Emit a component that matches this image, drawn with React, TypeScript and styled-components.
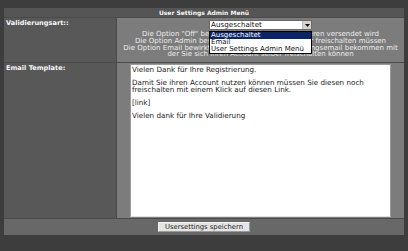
import styled, { createGlobalStyle } from "styled-components"

const GlobalStyle = createGlobalStyle`
  html, body {
    margin: 0;
    padding: 0;
    background: #3d3d3d;
  }
  body {
    font-family: "DejaVu Sans", Verdana, sans-serif;
    font-size: 7px;
    color: #ececec;
  }
`

const Page = styled.div`
  padding: 8px 4px 0 4px;
  width: 400px;
`

const Table = styled.div`
  display: grid;
  grid-template-columns: 112px 287px;
  gap: 1px;
  background: #4a4a4a;
`

const HeaderCell = styled.div`
  grid-column: 1 / 3;
  height: 9px;
  line-height: 9px;
  font-size: 6px;
  background: #555555;
  color: #f4f4f4;
  font-weight: bold;
  text-align: center;
`

const LabelCell = styled.div`
  background: #585858;
  color: #f6f6f6;
  font-weight: bold;
  font-size: 6.6px;
  padding: 2px 2px;
  line-height: 7px;
`

const ValueCell = styled.div<{ $pad?: string }>`
  background: #7c7c7c;
  padding: ${(p) => p.$pad || "2px 0 4px 0"};
  display: flex;
  flex-direction: column;
  align-items: center;
  position: relative;
  min-width: 0;
`

const SelectWrap = styled.div`
  position: relative;
  width: 103px;
  margin-bottom: 1px;
`

const SelectBox = styled.div`
  height: 10px;
  box-sizing: border-box;
  background: #ffffff;
  border: 1px solid #6a6a6a;
  color: #111;
  font-size: 7.2px;
  line-height: 8px;
  padding-left: 1px;
  display: flex;
  justify-content: space-between;
`

const Arrow = styled.div`
  width: 8px;
  height: 8px;
  background: #d6d3ce;
  border-left: 1px solid #b8b8b8;
  display: flex;
  align-items: center;
  justify-content: center;
`

const DropList = styled.div`
  position: absolute;
  top: 11px;
  left: 0;
  right: 0;
  background: #ffffff;
  border: 1px solid #000;
  z-index: 2;
`

const Option = styled.div<{ $selected?: boolean }>`
  height: 7px;
  line-height: 7px;
  font-size: 7px;
  padding-left: 1px;
  white-space: nowrap;
  overflow: hidden;
  background: ${(p) => (p.$selected ? "#0a246a" : "transparent")};
  color: ${(p) => (p.$selected ? "#ffffff" : "#111111")};
`

const Description = styled.div`
  text-align: center;
  line-height: 6.8px;
  font-size: 7px;
  color: #ececec;
  white-space: nowrap;
`

const TemplateBox = styled.div`
  width: 261px;
  height: 153px;
  box-sizing: border-box;
  background: #ffffff;
  border: 1px solid #9a9a9a;
  border-bottom-color: #e0e0e0;
  color: #1a1a1a;
  padding: 2px 1px;
  font-size: 7.2px;
  line-height: 6.5px;
  white-space: pre-wrap;
`

const FooterCell = styled.div`
  grid-column: 1 / 3;
  background: #686868;
  height: 16px;
  display: flex;
  align-items: center;
  justify-content: center;
`

const SaveButton = styled.div`
  width: 92px;
  height: 10px;
  box-sizing: border-box;
  background: #e4e4e4;
  border: 1px solid #f4f4f4;
  border-right-color: #9a9a9a;
  border-bottom-color: #9a9a9a;
  color: #1a1a1a;
  font-size: 6.8px;
  text-align: center;
  line-height: 8px;
`

const template = `Vielen Dank für Ihre Registrierung.

Damit Sie ihren Account nutzen können müssen Sie diesen noch
freischalten mit einem Klick auf diesen Link.

[link]

Vielen dank für Ihre Validierung`

export default function App() {
  return (
    <>
      <GlobalStyle />
      <Page>
        <Table>
          <HeaderCell>User Settings Admin Menü</HeaderCell>
          <LabelCell>Validierungsart::</LabelCell>
          <ValueCell>
            <SelectWrap>
              <SelectBox>
                <span>Ausgeschaltet</span>
                <Arrow>
                  <svg width="5" height="3" viewBox="0 0 5 3">
                    <path d="M0 0 L5 0 L2.5 3 Z" fill="#111" />
                  </svg>
                </Arrow>
              </SelectBox>
              <DropList>
                <Option $selected>Ausgeschaltet</Option>
                <Option>Email</Option>
                <Option>User Settings Admin Menü</Option>
              </DropList>
            </SelectWrap>
            <Description>
              Die Option "Off" bewirkt, dass nichts zum Validieren versendet wird
              <br />
              Die Option Admin bewirkt, dass Sie als Admin User freischalten müssen
              <br />
              Die Option Email bewirkt dass der User eine Validierungsemail bekommen mit
              <br />
              der Sie sich ihren Account selber freischalten können
            </Description>
          </ValueCell>
          <LabelCell>Email Template:</LabelCell>
          <ValueCell $pad="1px 0 1px 0">
            <TemplateBox>{template}</TemplateBox>
          </ValueCell>
          <FooterCell>
            <SaveButton>Usersettings speichern</SaveButton>
          </FooterCell>
        </Table>
      </Page>
    </>
  )
}
